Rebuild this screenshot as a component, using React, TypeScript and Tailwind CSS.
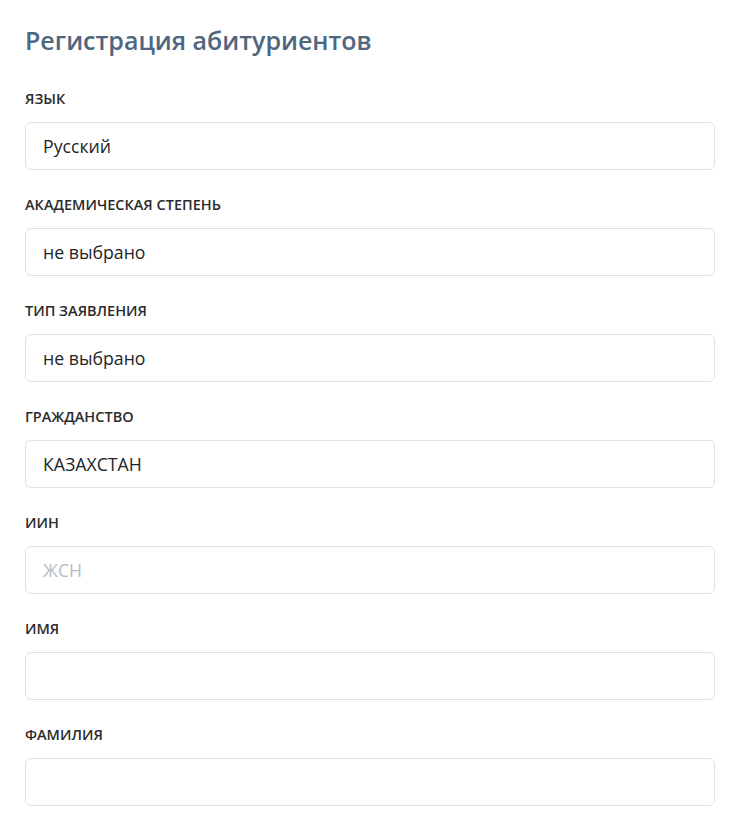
import React from "react";

const fields: { label: string; value?: string; placeholder?: string }[] = [
  { label: "Язык", value: "Русский" },
  { label: "Академическая степень", value: "не выбрано" },
  { label: "Тип заявления", value: "не выбрано" },
  { label: "Гражданство", value: "КАЗАХСТАН" },
  { label: "ИИН", placeholder: "ЖСН" },
  { label: "Имя" },
  { label: "Фамилия" },
];

export default function App() {
  return (
    <div className="min-h-[816px] bg-white px-[25px] pt-[22px] font-['Open_Sans',sans-serif]">
      <h1 className="text-[25px] font-semibold leading-[36px] text-[#4f6680]">
        Регистрация абитуриентов
      </h1>
      <div className="mt-[31px] flex flex-col gap-[25px]">
        {fields.map((f) => (
          <div key={f.label} className="flex flex-col">
            <label className="text-[14.5px] font-semibold uppercase leading-[20px] text-[#2b2b2b]">
              {f.label}
            </label>
            <input
              readOnly
              value={f.value ?? ""}
              placeholder={f.placeholder}
              className="mt-[13px] h-[48px] w-[690px] rounded-[6px] border border-[#dde1e6] bg-white px-[17px] text-[17.7px] text-[#212529] outline-none placeholder:text-[#b5bcc4]"
            />
          </div>
        ))}
      </div>
    </div>
  );
}
